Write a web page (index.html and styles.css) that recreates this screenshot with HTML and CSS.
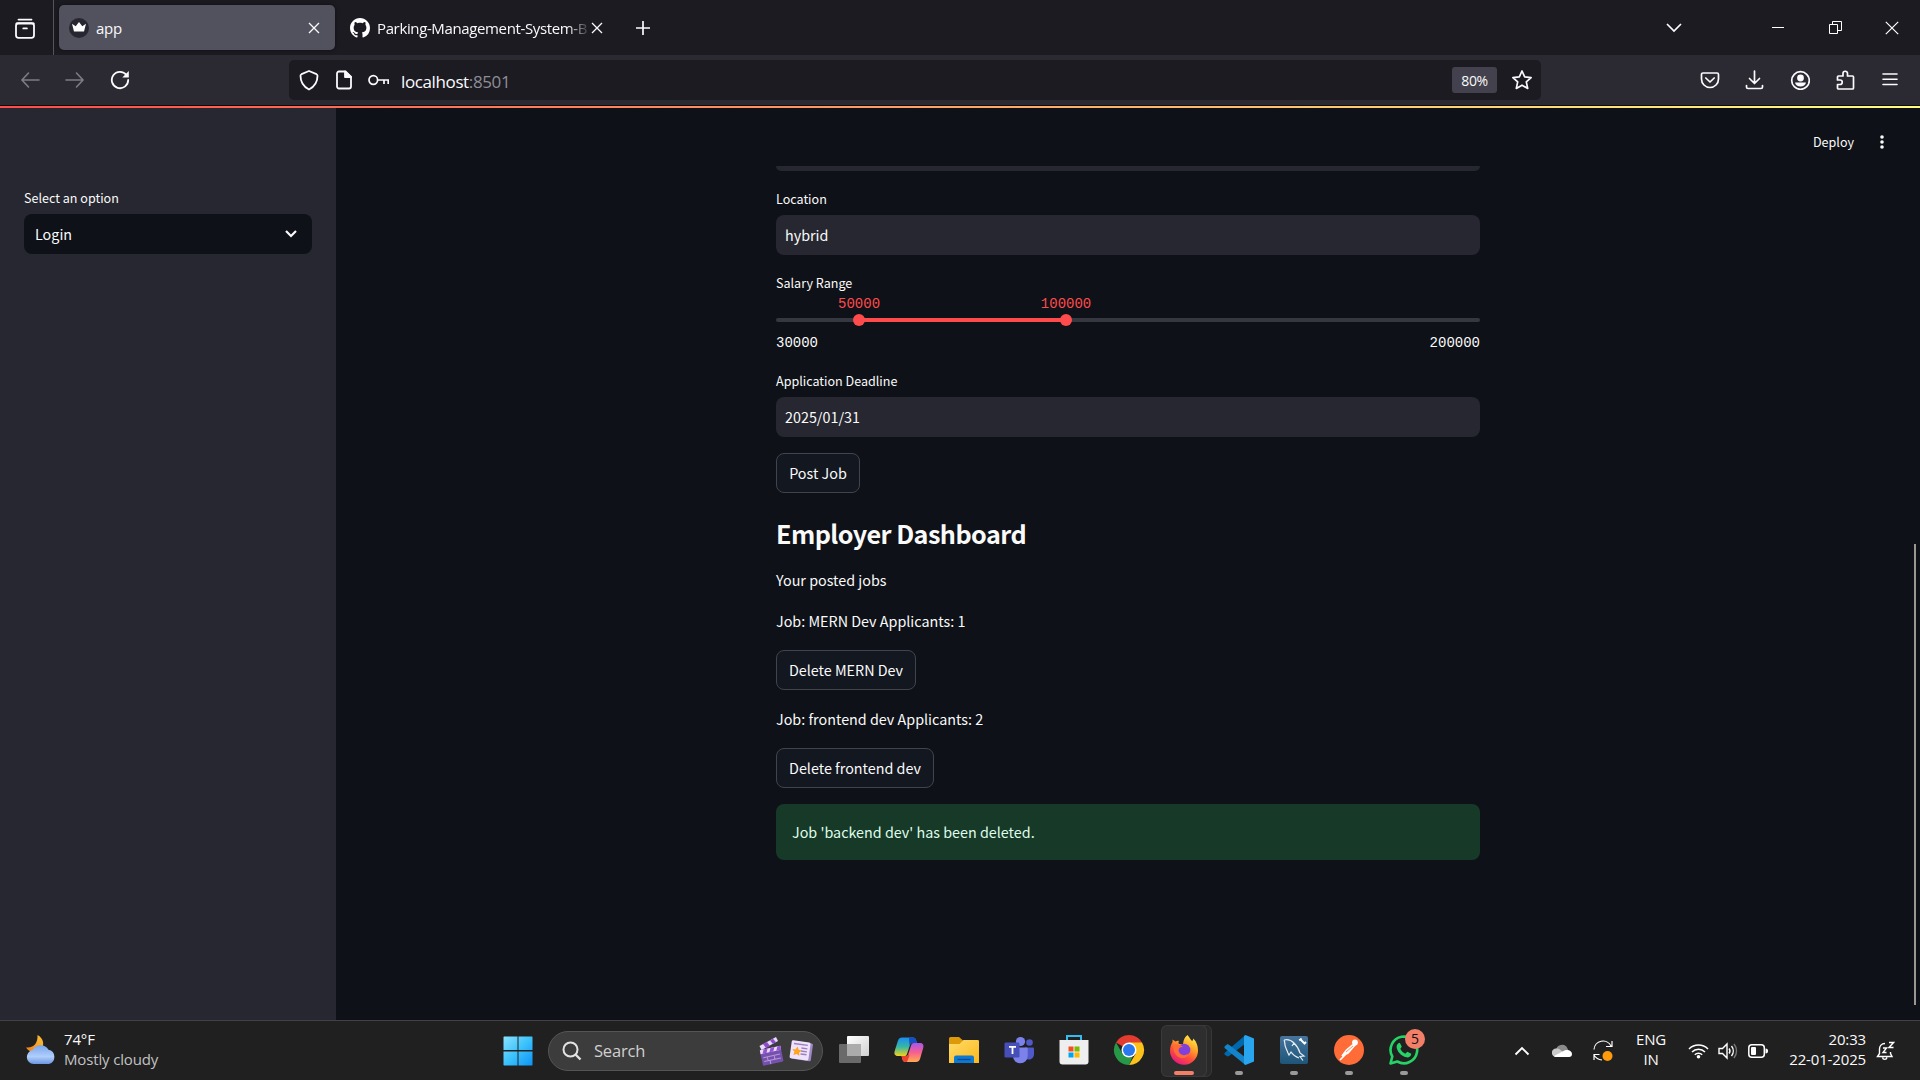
FILE: index.html
```html
<!DOCTYPE html>
<html lang="en">
<head>
<meta charset="utf-8">
<title>app</title>
<link rel="stylesheet" href="styles.css">
</head>
<body>
<div class="screen">
  <header class="tabbar">
    <div class="tabview">
      <svg width="22" height="22" viewBox="0 0 22 22" fill="none" stroke="#fbfbfe" stroke-width="1.8" stroke-linecap="round"><path d="M4.5 1.6h13"/><rect x="2" y="5.2" width="18" height="14.6" rx="2.5"/><path d="M2.6 5.6h17" stroke-width="2"/><path d="M9.3 10.4h3.6"/></svg>
    </div>
    <div class="tab tab-active">
      <svg class="favicon" width="20" height="20" viewBox="0 0 20 20"><circle cx="10" cy="10" r="10" fill="#262730"/><path d="M3 5.8l3.7 2.5L10 4l3.3 4.3L17 5.8 15 13.5H5z" fill="#fff"/></svg>
      <span class="tab-title">app</span>
      <svg class="tab-close" width="12" height="12" viewBox="0 0 12 12" stroke="#fbfbfe" stroke-width="1.3"><path d="M1 1l10 10M11 1L1 11"/></svg>
    </div>
    <div class="tab">
      <svg class="favicon" width="20" height="20" viewBox="0 0 16 16" fill="#fff"><path d="M8 0C3.58 0 0 3.58 0 8c0 3.54 2.29 6.53 5.47 7.59.4.07.55-.17.55-.38 0-.19-.01-.82-.01-1.49-2.01.37-2.53-.49-2.69-.94-.09-.23-.48-.94-.82-1.13-.28-.15-.68-.52-.01-.53.63-.01 1.08.58 1.23.82.72 1.21 1.87.87 2.33.66.07-.52.28-.87.51-1.07-1.78-.2-3.64-.89-3.64-3.95 0-.87.31-1.59.82-2.15-.08-.2-.36-1.02.08-2.12 0 0 .67-.21 2.2.82.64-.18 1.32-.27 2-.27s1.36.09 2 .27c1.53-1.04 2.2-.82 2.2-.82.44 1.1.16 1.92.08 2.12.51.56.82 1.27.82 2.15 0 3.07-1.87 3.75-3.65 3.95.29.25.54.73.54 1.48 0 1.07-.01 1.93-.01 2.2 0 .21.15.46.55.38A8.01 8.01 0 0016 8c0-4.42-3.58-8-8-8z"/></svg>
      <span class="tab-title tab-title-long">Parking-Management-System-B</span>
      <svg class="tab-close" width="12" height="12" viewBox="0 0 12 12" stroke="#fbfbfe" stroke-width="1.3"><path d="M1 1l10 10M11 1L1 11"/></svg>
    </div>
    <svg class="newtab" width="16" height="16" viewBox="0 0 16 16" stroke="#fbfbfe" stroke-width="1.7"><path d="M8 1v14M1 8h14"/></svg>
    <div class="window-controls">
      <svg width="18" height="10" viewBox="0 0 18 10" fill="none" stroke="#fbfbfe" stroke-width="1.7"><path d="M2 1l7 7 7-7"/></svg>
      <svg width="12" height="2" viewBox="0 0 12 2"><path d="M0 0h12v1H0z" fill="#fff"/></svg>
      <svg width="13" height="13" viewBox="0 0 13 13" fill="none" stroke="#fff"><path d="M.5 3.5h8v9h-8zM3.5 3.5v-3h9v9h-4"/></svg>
      <svg width="14" height="14" viewBox="0 0 14 14" stroke="#fff" stroke-width="1.2"><path d="M.8.8l12.4 12.4M13.2.8L.8 13.2"/></svg>
    </div>
  </header>

  <nav class="toolbar">
    <div class="nav-buttons">
      <svg width="20" height="20" viewBox="0 0 20 20" fill="none" stroke="#7d7c85" stroke-width="1.6" stroke-linecap="round"><path d="M8.5 3L2 10l6.5 7M2 10h17"/></svg>
      <svg width="20" height="20" viewBox="0 0 20 20" fill="none" stroke="#7d7c85" stroke-width="1.6" stroke-linecap="round"><path d="M11.5 3L18 10l-6.5 7M18 10H1"/></svg>
      <svg width="20" height="20" viewBox="0 0 20 20" fill="none" stroke="#fbfbfe" stroke-width="1.8" stroke-linecap="round"><path d="M16.5 5A8.2 8.2 0 1 0 18.2 10"/><path d="M18.8 1v6.5h-6.5z" fill="#fbfbfe" stroke="none"/></svg>
    </div>
    <div class="urlbar">
      <svg width="20" height="22" viewBox="0 0 20 22" fill="none" stroke="#fbfbfe" stroke-width="1.8" stroke-linejoin="round"><path d="M10 2l7.500 3.200c.8.400 1 1 1 1.600C18.500 13 15 18 10 20.500 5 18 1.500 13 1.500 6.800c0-.6.200-1.200 1-1.600z"/></svg>
      <svg class="icon-page" width="16" height="20" viewBox="0 0 16 20" fill="none" stroke="#fbfbfe" stroke-width="1.8" stroke-linejoin="round"><path d="M3 1.500h6.500L15 7v9.500a2 2 0 0 1-2 2H3a2 2 0 0 1-2-2v-13a2 2 0 0 1 2-2z"/><path d="M9 1.500V7h6z" fill="#fbfbfe"/></svg>
      <svg class="icon-key" width="21" height="14" viewBox="0 0 21 14" fill="none" stroke="#fbfbfe" stroke-width="1.7"><circle cx="5.3" cy="7" r="4.3"/><path d="M9.600 7H20.200v4M16 7v4"/></svg>
      <span class="url"><span class="url-host">localhost</span>:8501</span>
      <span class="zoom-badge">80%</span>
      <svg class="icon-star" width="22" height="22" viewBox="0 0 22 22" fill="none" stroke="#fbfbfe" stroke-width="1.7" stroke-linejoin="round"><path d="M11 2l2.700 5.900 6.400.7-4.800 4.300 1.400 6.500L11 16.200l-5.700 3.200 1.400-6.500L1.900 8.600l6.400-.7z"/></svg>
    </div>
    <div class="tool-icons">
      <svg width="20" height="20" viewBox="0 0 20 20" fill="none" stroke="#fbfbfe" stroke-width="1.7" stroke-linecap="round" stroke-linejoin="round"><path d="M3 3h14a1.500 1.500 0 0 1 1.500 1.500V9a8.500 8.500 0 0 1-17 0V4.500A1.500 1.500 0 0 1 3 3z"/><path d="M5.800 8l4.200 4 4.200-4"/></svg>
      <svg width="20" height="20" viewBox="0 0 20 20" fill="none" stroke="#fbfbfe" stroke-width="1.7" stroke-linecap="round" stroke-linejoin="round"><path d="M9.500 1v12M4.500 8.500l5 5 5-5M1.500 15.500V17A1.500 1.500 0 0 0 3 18.500h13a1.500 1.500 0 0 0 1.500-1.500v-1.500"/></svg>
      <svg width="20" height="20" viewBox="0 0 20 20"><circle cx="10.500" cy="10.500" r="8.800" fill="none" stroke="#fbfbfe" stroke-width="1.7"/><circle cx="10.500" cy="8" r="3.400" fill="#fbfbfe"/><path d="M5 12.500h11c-.5 2.500-2.700 4-5.500 4s-5-1.500-5.500-4z" fill="#fbfbfe"/></svg>
      <svg width="20" height="20" viewBox="0 0 20 20" fill="none" stroke="#fbfbfe" stroke-width="1.7" stroke-linejoin="round"><path d="M8 6V3.500a2.200 2.200 0 0 1 4.500 0V6h5a1 1 0 0 1 1 1v11a1 1 0 0 1-1 1h-14a1 1 0 0 1-1-1v-3.500H5A2.200 2.200 0 0 0 5 10H2.500V7a1 1 0 0 1 1-1z"/></svg>
      <svg width="20" height="20" viewBox="0 0 20 20" stroke="#fbfbfe" stroke-width="1.6" stroke-linecap="round"><path d="M3 4h14M3 9.200h14M3 14.500h14"/></svg>
    </div>
  </nav>
  <div class="decoration"></div>

  <div class="app">
    <aside class="sidebar">
      <label class="label">Select an option</label>
      <div class="select"><span>Login</span>
        <svg width="12" height="8" viewBox="0 0 12 8" fill="none" stroke="#fafafa" stroke-width="2.2"><path d="M1 1l5 5 5-5"/></svg>
      </div>
    </aside>
    <main class="main">
      <div class="app-header"><span class="deploy">Deploy</span>
        <svg width="4" height="14" viewBox="0 0 4 14" fill="#fafafa"><circle cx="2" cy="2" r="1.8"/><circle cx="2" cy="7" r="1.8"/><circle cx="2" cy="12" r="1.8"/></svg>
      </div>
      <div class="content">
        <div class="clipped-input"></div>
        <label class="label label-location">Location</label>
        <div class="input">hybrid</div>
        <label class="label label-salary">Salary Range</label>
        <div class="slider">
          <div class="track"></div>
          <div class="thumb" style="left:11.8%"><span>50000</span></div>
          <div class="thumb" style="left:41.2%"><span>100000</span></div>
        </div>
        <div class="slider-range"><span>30000</span><span>200000</span></div>
        <label class="label label-deadline">Application Deadline</label>
        <div class="input">2025/01/31</div>
        <button class="button button-post">Post Job</button>
        <h2 class="heading">Employer Dashboard</h2>
        <p class="text">Your posted jobs</p>
        <p class="text">Job: MERN Dev Applicants: 1</p>
        <button class="button button-mern">Delete MERN Dev</button>
        <p class="text">Job: frontend dev Applicants: 2</p>
        <button class="button button-frontend">Delete frontend dev</button>
        <div class="alert">Job 'backend dev' has been deleted.</div>
      </div>
      <div class="scrollbar"></div>
    </main>
  </div>

  <footer class="taskbar">
    <div class="weather">
      <svg width="32" height="32" viewBox="0 0 32 32"><defs><linearGradient id="moon" x1="1" y1="0" x2="0" y2="1"><stop offset="0" stop-color="#fcc63b"/><stop offset="1" stop-color="#ee7a16"/></linearGradient><linearGradient id="cloud" x1="0" y1="0" x2="0" y2="1"><stop offset="0" stop-color="#79a5ef"/><stop offset=".6" stop-color="#b0cefa"/><stop offset="1" stop-color="#6c96e6"/></linearGradient></defs><path d="M12.500 0c6 3 7.500 10 3.500 14.500S4 18 1 12.500c8 1 12-5 11.500-12.500z" fill="url(#moon)"/><path d="M8.500 29a7 7 0 0 1-.8-13.900 9 9 0 0 1 15.800-.3A7.300 7.300 0 0 1 24 29z" fill="url(#cloud)"/></svg>
      <div class="weather-text"><span>74°F</span><span class="muted">Mostly cloudy</span></div>
    </div>

    <div class="launcher">
      <svg class="start" width="30" height="30" viewBox="0 0 30 30"><defs><linearGradient id="win" x1="0" y1="0" x2="1" y2="1"><stop offset="0" stop-color="#8be2ff"/><stop offset=".5" stop-color="#3cc2fb"/><stop offset="1" stop-color="#0d93f5"/></linearGradient></defs><path d="M1 .5h13.500V14H.5V1zM15.500.500H29l.500.500v13h-14zM.500 15.500h14v14H1l-.5-.5zM15.500 15.500h14V29l-.500.500H15.500z" fill="url(#win)"/></svg>
      <div class="search">
        <svg width="20" height="20" viewBox="0 0 20 20" fill="none" stroke="#e2e2e2" stroke-width="2"><circle cx="8.500" cy="8.500" r="7"/><path d="M13.500 13.500l5 5" stroke-width="2.4"/></svg>
        <span class="search-label">Search</span>
        <svg class="clapper" width="26" height="30" viewBox="0 0 26 30"><g transform="rotate(-12 13 19)"><rect x="3" y="12" width="21" height="16" rx="1.5" fill="#7650ad"/><path d="M3 12h21v4H3z" fill="#ead9ff"/><path d="M7 12h4l-2 4H5zM14 12h4l-2 4h-4zM21 12h3v4h-5z" fill="#9453d1"/><path d="M5 20h17M5 24h17M9 20v4M16 20v4M11 24v4" stroke="#b79ad8" stroke-width="1"/></g><path d="M1.500 10L18 1l2 4-16.500 9z" fill="#ead9ff"/><path d="M5 8l4-2 3 4-4 2zM12 4.500l3-1.700 3 3.500-3 1.700z" fill="#8d4cca"/></svg>
        <svg width="24" height="24" viewBox="0 0 24 24"><g transform="rotate(8 12 12)"><rect x="3" y="3" width="20" height="18" rx="1.5" fill="#a187c4"/><rect x="1.500" y="2.500" width="19" height="18" rx="1.5" fill="#eee3fb"/><path d="M4 5.500h14M12 9h6M12 12h6M12 15h6" stroke="#9a80bd" stroke-width="1.4"/><path d="M8 8l1.500 3 3.300.4-2.400 2.300.6 3.300L8 15.500 5 17l.6-3.300-2.400-2.300 3.300-.4z" fill="#ffa51f"/></g></svg>
      </div>
      <div class="task"><svg width="32" height="32" viewBox="0 0 32 32"><defs><linearGradient id="tv" x1="0" y1="0" x2="1" y2="1"><stop offset="0" stop-color="#fff"/><stop offset="1" stop-color="#d0d0d0"/></linearGradient></defs><rect x="9" y="2" width="22" height="20" rx="1" fill="url(#tv)"/><rect x="1" y="10" width="22" height="19" rx="1" fill="#6a6a6a"/><path d="M9 10h14v12H9z" fill="#ababab"/></svg></div>
      <div class="task"><svg width="32" height="32" viewBox="0 0 32 32"><defs><linearGradient id="cpa" x1="0" y1="0" x2="0" y2="1"><stop offset="0" stop-color="#1a8cf0"/><stop offset=".5" stop-color="#36b7a7"/><stop offset="1" stop-color="#f1d21b"/></linearGradient><linearGradient id="cpb" x1="0" y1="0" x2="0" y2="1"><stop offset="0" stop-color="#a656ef"/><stop offset=".5" stop-color="#f75f8f"/><stop offset="1" stop-color="#ffab50"/></linearGradient></defs><path d="M9 3.500h11c2 0 2.500 1 3 2.500L24 9h-4.500c-1.500 0-2.200.8-2.700 2.500L14 20c-.6 1.700-1.500 2-3 2H5c-3.500 0-4-2.500-3.300-5L5 6.500c.7-2 2-3 4-3z" fill="url(#cpa)"/><path d="M16 3.500h4c2 0 2.500 1 3 2.500L24 9h-5c-1.500 0-2 1-2.500 2.500z" fill="#164fc4"/><path d="M23 28H12.500c-2 0-2.500-1-3-2.500L8.500 22H13c1.500 0 2-.8 2.500-2.500L18 11.500C18.600 9.800 19.500 9 21 9h6c3.500 0 3.800 2.500 3.200 5L27 25c-.7 2-2 3-4 3z" fill="url(#cpb)"/><path d="M8.500 22H13c1.500 0 2-.8 2.500-2.500l1 2L14 28h-1.500c-2 0-2.500-1-3-2.500z" fill="#e9432f"/></svg></div>
      <div class="task"><svg width="32" height="32" viewBox="0 0 32 32"><defs><linearGradient id="fold" x1="0" y1="0" x2="1" y2="1"><stop offset="0" stop-color="#ffdc6a"/><stop offset="1" stop-color="#fbb81d"/></linearGradient></defs><path d="M1 4.500A1.500 1.500 0 0 1 2.500 3H11l4 3.500H31V14H1z" fill="#dc9a08"/><path d="M1 10h10.500l4-4H29.500A1.500 1.500 0 0 1 31 7.500V29H1z" fill="url(#fold)"/><path d="M6 29v-5.500a2 2 0 0 1 2-2h16a2 2 0 0 1 2 2V29z" fill="#0f78d0"/><path d="M9.500 25.500h13" stroke="#074c93" stroke-width="1.3"/></svg></div>
      <div class="task"><svg width="32" height="32" viewBox="0 0 32 32"><circle cx="17.500" cy="7.500" r="4.6" fill="#7b83eb"/><circle cx="26.500" cy="8.500" r="3.3" fill="#5059c9"/><path d="M22 13.500h8a1 1 0 0 1 1 1V20c0 3-2 5.500-5 5.500s-4-2-4-4z" fill="#5059c9"/><path d="M11 13.500h12.500a1.200 1.200 0 0 1 1.200 1.200V22a7.300 7.300 0 0 1-14.700 0z" fill="#7b83eb"/><rect x="1.500" y="8.500" width="15" height="15" rx="1.3" fill="#464eb8"/><path d="M6 12h7v1.800h-2.600V20H8.600v-6.200H6z" fill="#fff"/></svg></div>
      <div class="task"><svg width="32" height="32" viewBox="0 0 32 32"><path d="M9 8V2h14v6" fill="none" stroke="#32bdf0" stroke-width="2"/><path d="M1.500 6h29v21.500a3 3 0 0 1-3 3h-23a3 3 0 0 1-3-3z" fill="#eee"/><path fill="#f25022" d="M10.500 12.500h5v5h-5z"/><path fill="#7fba00" d="M16.500 12.500h5v5h-5z"/><path fill="#00a4ef" d="M10.500 18.500h5v5h-5z"/><path fill="#ffb900" d="M16.500 18.500h5v5h-5z"/></svg></div>
      <div class="task"><svg width="32" height="32" viewBox="0 0 32 32"><path d="M16 16L3 8.500A15 15 0 0 1 29 8.500z" fill="#e33b2e"/><path d="M16 8.500h13A15 15 0 0 1 16 31l6.500-11z" fill="#fcc11a"/><path d="M3 8.500l6.500 11.300L16 23.500l3.500-.5L16 31A15 15 0 0 1 3 8.500z" fill="#279847"/><circle cx="16" cy="16" r="7.5" fill="#fff"/><circle cx="16" cy="16" r="6" fill="#2a78ed"/></svg></div>
      <div class="task task-active"><svg width="32" height="32" viewBox="0 0 32 32"><defs><linearGradient id="ff" x1=".8" y1="0" x2=".25" y2="1"><stop offset="0" stop-color="#fff44f"/><stop offset=".35" stop-color="#ffa52a"/><stop offset=".65" stop-color="#ff5038"/><stop offset="1" stop-color="#e31587"/></linearGradient></defs><path d="M19.500 1c1.800 2 2.500 4 4.500 6 1.300-.6 1-1.500 1-2.500 3 2 5 7 5 12A14 14 0 0 1 2 17c0-4 1-6.500 2.500-9V5.500l3 2C9 6.500 10.500 6.500 11 7c-.7.800-.7 2 0 3h4c.5-4 1.500-7 4.500-9z" fill="url(#ff)"/><circle cx="16" cy="16" r="6.300" fill="#8040dc"/><path d="M5 11c5-1 8 0 10 2-4 0-5 2-4 5 2 4 7 4 10 1-1 5-7 7-12 3-3-3-4-7-4-11z" fill="#ff6d34"/></svg></div>
      <div class="task task-open"><svg width="32" height="32" viewBox="0 0 32 32"><path d="M22.500 1v8.500L6 22 4.500 22.500 1.500 20.500V19z" fill="#0068ad"/><path d="M1.500 12.500L4.500 10 7 11.500l15.500 12V31L1.500 14z" fill="#1384ca"/><path d="M22.500 1L31 4.500v23L22.500 31l-1.500-1V2z" fill="#28a5ee"/></svg></div>
      <div class="task task-open"><svg width="32" height="32" viewBox="0 0 32 32"><defs><linearGradient id="sql" x1="0" y1="0" x2="0" y2="1"><stop offset="0" stop-color="#46749d"/><stop offset="1" stop-color="#1e5578"/></linearGradient></defs><rect x="2" y="2" width="28" height="28" rx="2" fill="url(#sql)"/><path d="M6 6c4-1 7 0 10 3 4 4 5 6 6 10l4 3-4 .5 3 4M6 6c1 2 1 3 1 5s2 5 3 8l1 2 2-3c2 3 5 5 8 6M14 12l2-3" fill="none" stroke="#e6edf3" stroke-width="1.2"/><path d="M22 5l5 5M21 6l3-1M26 10l2-2" stroke="#fff" stroke-width="1.8"/></svg></div>
      <div class="task task-open"><svg width="32" height="32" viewBox="0 0 32 32"><circle cx="16" cy="16" r="15" fill="#ff6c37"/><circle cx="22" cy="8.500" r="2.9" fill="#fff"/><path d="M22 11l-7 8-6 3 4.500-6 6-5zM14 19l-7 7" fill="#fff" stroke="#fff" stroke-width="1.6"/><path d="M13 18l7-6" stroke="#ff6c37" stroke-width=".8"/></svg></div>
      <div class="task task-open"><svg width="32" height="32" viewBox="0 0 32 32"><path d="M2.500 29.500l1.800-7a13.300 13.300 0 1 1 5 5z" fill="none" stroke="#25d366" stroke-width="2.6" stroke-linejoin="round"/><path d="M11.800 8.800l2 4-1.500 2c1 2.200 2.800 4 5 5l2-2 4 2c-.4 3-2.700 4-5 3.500C13 22 9 17.500 8.600 13c-.1-2 1.200-4 3.200-4.200z" fill="#25d366"/></svg><span class="badge">5</span></div>
    </div>

    <div class="tray">
      <svg class="tray-chevron" width="16" height="10" viewBox="0 0 16 10" fill="none" stroke="#fff" stroke-width="1.9"><path d="M1.500 8.500L8 2l6.500 6.500"/></svg>
      <svg class="tray-cloud" width="20" height="14" viewBox="0 0 20 14"><path d="M4 7a6 6 0 0 1 11.500-2.500L18 10z" fill="#8b8b8b"/><path d="M4 13a4.200 4.200 0 0 1 0-8.400c2-.2 3.500.5 5 1.800l9 6z" fill="#c9c9c9"/><path d="M2 12L13 6.200c4-1 7 1 7 3.800a3 3 0 0 1-3 3H4c-1 0-1.500-.5-2-1z" fill="#fff"/></svg>
      <svg class="tray-sync" width="22" height="22" viewBox="0 0 22 22" fill="none" stroke="#fff" stroke-width="1.2"><path d="M2 9.500A9 9 0 0 1 19 6M20 1v5.500h-6M7.500 14.500H2V20M2 15a10 10 0 0 0 8 5"/><circle cx="15.500" cy="16" r="5" fill="#ff9a0b" stroke="none"/></svg>
      <div class="lang"><span>ENG</span><span>IN</span></div>
      <svg class="tray-wifi" width="21" height="16" viewBox="0 0 21 16" fill="none" stroke="#fff" stroke-width="1.5"><path d="M1 6a13.500 13.500 0 0 1 19 0M4 9a9 9 0 0 1 13 0M6.800 11.800a5.200 5.200 0 0 1 7.400 0"/><circle cx="10.500" cy="13.800" r="1.8" fill="#fff" stroke="none"/></svg>
      <svg class="tray-volume" width="20" height="18" viewBox="0 0 20 18" fill="none" stroke="#fff" stroke-width="1.4"><path d="M1 6.500h3.500L9 2v14l-4.500-4.500H1z"/><path d="M11 6.500a4 4 0 0 1 0 5M13.500 4a8 8 0 0 1 0 10"/><path d="M16 2a11 11 0 0 1 0 14" stroke="#777"/></svg>
      <svg class="tray-battery" width="20" height="14" viewBox="0 0 20 14"><rect x=".8" y=".8" width="15.5" height="12.4" rx="3" fill="none" stroke="#fff" stroke-width="1.5"/><rect x="3" y="3" width="5" height="8" rx="1" fill="#fff"/><path d="M17.500 4.500c2 .3 2.500 1 2.500 2.500s-.5 2.200-2.500 2.500z" fill="#fff"/></svg>
      <div class="clock"><span>20:33</span><span>22-01-2025</span></div>
      <svg class="tray-bell" width="19" height="20" viewBox="0 0 19 20" fill="none" stroke="#fff" stroke-width="1.4"><path d="M9 2.500C5.500 2.500 3.500 5 3.500 8v4.500l-2 3h14.500l-1.500-3V11M6.500 16.500c.5 2.500 4 2.500 4.500 0M7 7h3.500L7 11.500h3.500M13 1.500h4.500l-4.500 5h4.500"/></svg>
    </div>
  </footer>
</div>
</body>
</html>
```
FILE: styles.css
```css
* { box-sizing: border-box; }
body {
  margin: 0;
  background: #0e1117;
  color: #fafafa;
  font-family: "Noto Sans CJK JP", "Noto Sans", sans-serif;
}
svg { display: block; flex: none; }
.screen {
  width: 1920px;
  height: 1080px;
  display: flex;
  flex-direction: column;
  overflow: hidden;
}

/* Browser chrome */
.tabbar, .toolbar, .taskbar { font-family: "Open Sans", "Noto Sans", sans-serif; }
.tabbar {
  height: 55px;
  flex: none;
  display: flex;
  align-items: center;
  background: #1c1b22;
}
.tabview {
  width: 54px;
  height: 55px;
  flex: none;
  display: flex;
  align-items: center;
  padding: 2px 0 0 14px;
  border-right: 1px solid #55545b;
}
.tab {
  height: 45px;
  width: 275px;
  display: flex;
  align-items: center;
  padding: 0 15px 0 10px;
  font-size: 15px;
}
.tab-active {
  width: 276px;
  margin: 0 5px;
  border-radius: 5px;
  background: #52525e;
  box-shadow: 0 0 4px rgba(0, 0, 0, .5);
}
.favicon { margin-right: 7px; }
.tab-title { flex: 1; letter-spacing: -.3px; white-space: nowrap; }
.tab-title-long {
  flex: none;
  width: 212px;
  letter-spacing: -.37px;
  margin-right: 2px;
  mask-image: linear-gradient(90deg, #000 190px, transparent 214px);
}
.newtab { margin-left: 20px; }
.window-controls {
  margin-left: auto;
  margin-right: 21px;
  display: flex;
  align-items: center;
}
.window-controls svg:nth-child(2) { margin-left: 89px; }
.window-controls svg:nth-child(3) { margin-left: 45px; }
.window-controls svg:nth-child(4) { margin-left: 43px; }

.toolbar {
  height: 50px;
  flex: none;
  display: flex;
  align-items: center;
  background: #2b2a33;
}
.nav-buttons { width: 289px; padding-left: 20px; display: flex; gap: 25px; }
.urlbar {
  width: 1252px;
  height: 40px;
  display: flex;
  align-items: center;
  padding: 0 8px 0 10px;
  border-radius: 5px;
  background: #1c1b22;
}
.icon-page { margin-left: 17px; }
.icon-key { margin-left: 16px; }
.url { margin-left: 12px; padding-top: 2px; font-size: 17px; letter-spacing: -.38px; color: #8f8e96; }
.url-host { color: #fbfbfe; }
.zoom-badge {
  margin-left: auto;
  width: 45px;
  height: 26px;
  border-radius: 3px;
  background: #42414d;
  font-size: 14px;
  line-height: 27px;
  text-align: center;
  letter-spacing: -.4px;
}
.icon-star { margin-left: 14px; }
.tool-icons { margin-left: auto; margin-right: 20px; display: flex; gap: 25px; }
.decoration {
  height: 3px;
  flex: none;
  border-top: 1px solid #0c0c0d;
  background: linear-gradient(90deg, #ff4b4b, #fffd80);
}

/* Application */
.app { height: 912px; flex: none; display: flex; }
.sidebar { width: 336px; padding: 80px 24px; background: #262730; }
.label { display: block; height: 20px; line-height: 20px; font-size: 12.55px; }
.select {
  margin-top: 6px;
  height: 40px;
  display: flex;
  align-items: center;
  justify-content: space-between;
  padding: 0 15px 1px 11px;
  border-radius: 8px;
  background: #0e1117;
  font-size: 14.35px;
}
.main { position: relative; width: 1584px; }
.app-header {
  height: 58px;
  display: flex;
  justify-content: flex-end;
  align-items: center;
  gap: 26px;
  padding: 10px 36px 0 0;
}
.deploy { padding-bottom: 1px; font-size: 12.55px; }
.content { width: 704px; margin-left: 440px; display: flex; flex-direction: column; align-items: flex-start; }
.clipped-input { width: 100%; height: 5px; border-radius: 0 0 8px 8px; background: #262730; }
.label-location { margin-top: 18px; }
.input {
  width: 100%;
  height: 40px;
  margin-top: 6px;
  padding-left: 9px;
  border-radius: 8px;
  background: #262730;
  font-size: 14.35px;
  line-height: 40px;
}
.label-salary { margin-top: 18px; }
.slider { position: relative; width: 100%; height: 4px; margin-top: 25px; }
.track {
  height: 4px;
  border-radius: 2px;
  background: linear-gradient(90deg, #353840 11.8%, #ff4b4b 11.8% 41.2%, #353840 41.2%);
}
.thumb {
  position: absolute;
  top: -4px;
  width: 12px;
  height: 12px;
  margin-left: -6px;
  border-radius: 50%;
  background: #ff4b4b;
  display: flex;
  justify-content: center;
}
.thumb span {
  position: absolute;
  bottom: 13px;
  color: #ff4b4b;
  font: 14px/18px "Liberation Mono", monospace;
}
.slider-range {
  width: 100%;
  margin-top: 12px;
  display: flex;
  justify-content: space-between;
  font: 14px/18px "Liberation Mono", monospace;
}
.label-deadline { margin-top: 19px; }
.button {
  height: 40px;
  padding: 0;
  border: 1px solid #41444c;
  border-radius: 8px;
  background: #131720;
  color: #fafafa;
  font: 14.35px/36px "Noto Sans CJK JP", sans-serif;
}
.button-post { width: 84px; margin-top: 16px; }
.button-mern { width: 140px; margin-bottom: 17px; }
.button-frontend { width: 158px; }
.heading {
  margin: 20px 0 15px;
  font-size: 25.2px;
  line-height: 40px;
  font-weight: 700;
  letter-spacing: -.55px;
}
.text { margin: 0 0 17px; height: 24px; line-height: 24px; font-size: 14.35px; }
.alert {
  width: 100%;
  height: 56px;
  margin-top: 16px;
  padding-left: 16px;
  border-radius: 8px;
  background: #173928;
  color: #dffde9;
  font-size: 14.35px;
  line-height: 56px;
}
.scrollbar {
  position: absolute;
  left: 1578px;
  top: 436px;
  width: 2px;
  height: 461px;
  background: #9b9692;
}

/* Taskbar */
.taskbar {
  height: 60px;
  flex: none;
  display: flex;
  align-items: center;
  border-top: 1px solid #424242;
  background: #202020;
  font-size: 15px;
  line-height: 20px;
}
.weather { width: 501px; padding-left: 25px; display: flex; gap: 7px; align-items: center; }
.weather-text, .lang, .clock {
  display: flex;
  flex-direction: column;
  letter-spacing: -.15px;
  padding-bottom: 3px;
}
.muted { color: #c2c2c2; }
.launcher { display: flex; align-items: center; }
.start { margin: 0 15px 0 2px; }
.search {
  width: 275px;
  height: 40px;
  display: flex;
  align-items: center;
  padding: 0 9px 0 13px;
  border: 1px solid #555;
  border-radius: 20px;
  background: #3c3c3c;
  margin-right: 6px;
}
.search-label { margin-left: 12px; font-size: 16.5px; color: #d0d0d0; letter-spacing: -.2px; }
.clapper { margin-left: auto; margin-right: 5px; }
.task {
  position: relative;
  width: 50px;
  height: 50px;
  margin-right: 5px;
  display: flex;
  align-items: center;
  justify-content: center;
}
.task svg { margin-bottom: 1px; }
.task-active {
  width: 44px;
  margin: 0 8px 0 3px;
  border-radius: 5px;
  background: #2e2e2e;
  box-shadow: 0 0 0 1px #3a3a3a, 5px 0 0 0 #292929, 5px 0 0 1px #373737;
}
.task-open::after, .task-active::after {
  content: "";
  position: absolute;
  bottom: 1px;
  width: 8px;
  height: 4px;
  border-radius: 2px;
  background: #9a9a9a;
}
.task-active::after { width: 20px; background: #f37f68; }
.badge {
  position: absolute;
  left: 26px;
  top: 3px;
  width: 20px;
  height: 20px;
  border-radius: 50%;
  background: #f37f68;
  color: #111;
  font-size: 14px;
  text-align: center;
}
.tray { margin-left: auto; margin-right: 25px; display: flex; align-items: center; }
.lang { align-items: center; width: 30px; }
.clock { align-items: flex-end; width: 80px; white-space: nowrap; }
.tray-cloud { margin-left: 22px; }
.tray-sync { margin: 0 22px 0 20px; }
.tray-wifi { margin-left: 22px; }
.tray-volume { margin-left: 9px; }
.tray-battery { margin: 0 18px 0 10px; }
.tray-bell { margin-left: 10px; }
```
